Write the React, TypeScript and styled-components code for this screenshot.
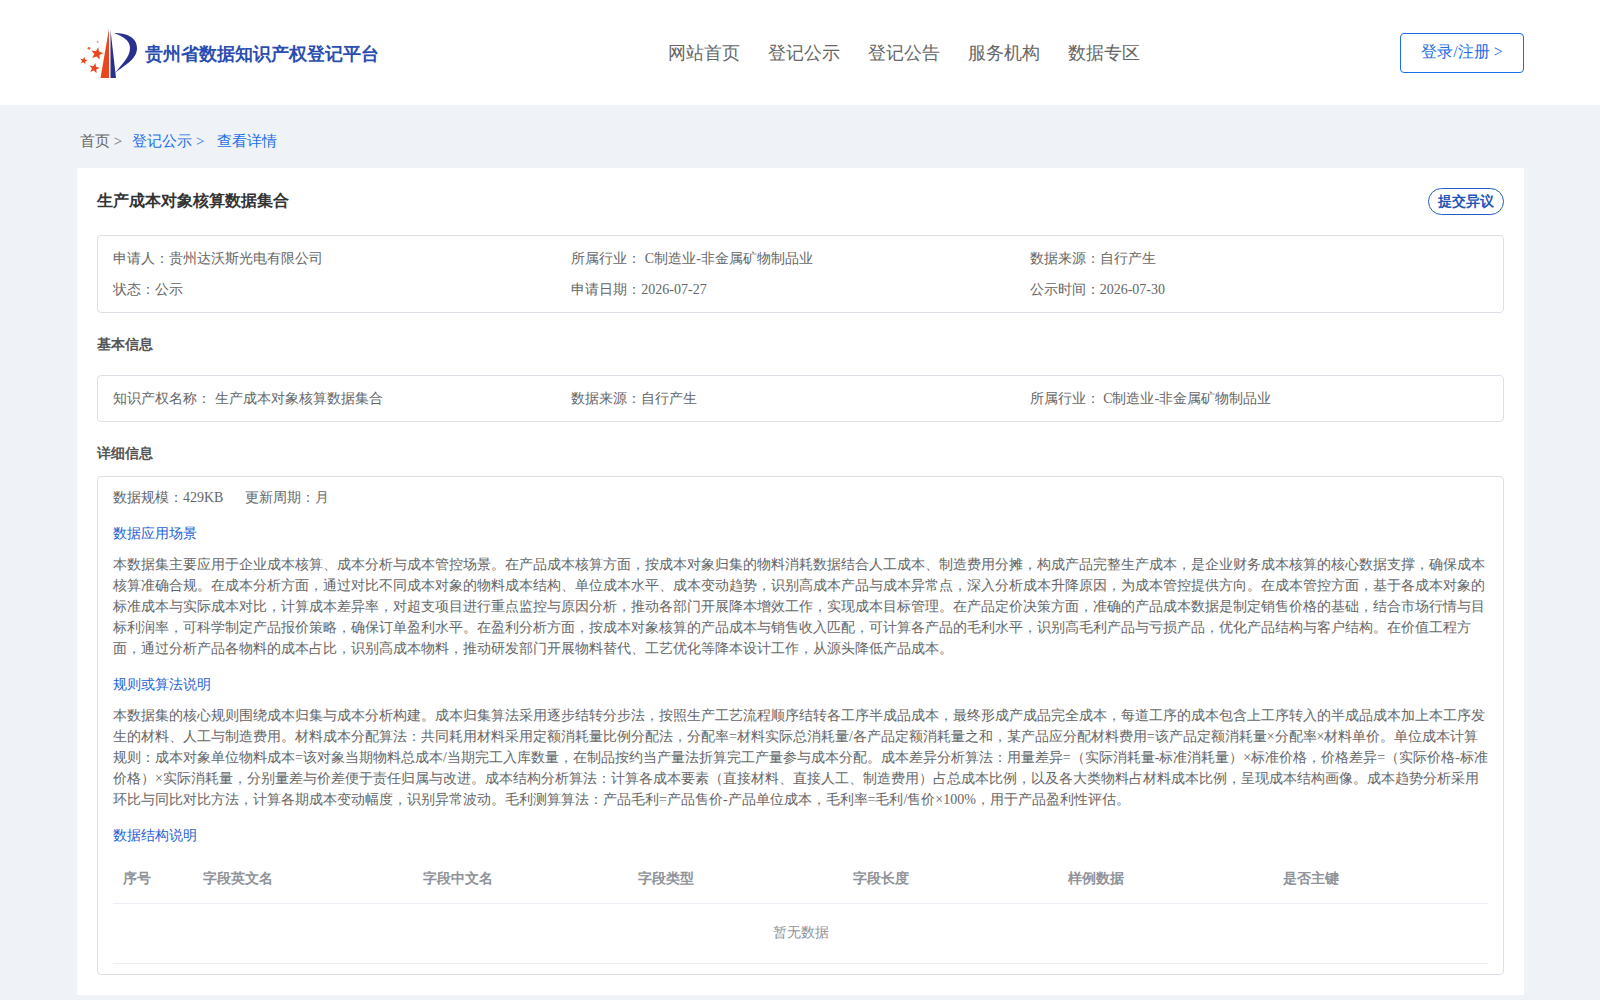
import React from 'react';
import styled, {createGlobalStyle} from 'styled-components';

const blue = '#1a6fe8';
const columns = ['序号', '字段英文名', '字段中文名', '字段类型', '字段长度', '样例数据', '是否主键'];
const columnWidths = [80, 220, 215, 215, 215, 215, 215];

const sceneText = '本数据集主要应用于企业成本核算、成本分析与成本管控场景。在产品成本核算方面，按成本对象归集的物料消耗数据结合人工成本、制造费用分摊，构成产品完整生产成本，是企业财务成本核算的核心数据支撑，确保成本核算准确合规。在成本分析方面，通过对比不同成本对象的物料成本结构、单位成本水平、成本变动趋势，识别高成本产品与成本异常点，深入分析成本升降原因，为成本管控提供方向。在成本管控方面，基于各成本对象的标准成本与实际成本对比，计算成本差异率，对超支项目进行重点监控与原因分析，推动各部门开展降本增效工作，实现成本目标管理。在产品定价决策方面，准确的产品成本数据是制定销售价格的基础，结合市场行情与目标利润率，可科学制定产品报价策略，确保订单盈利水平。在盈利分析方面，按成本对象核算的产品成本与销售收入匹配，可计算各产品的毛利水平，识别高毛利产品与亏损产品，优化产品结构与客户结构。在价值工程方面，通过分析产品各物料的成本占比，识别高成本物料，推动研发部门开展物料替代、工艺优化等降本设计工作，从源头降低产品成本。';

const ruleText = '本数据集的核心规则围绕成本归集与成本分析构建。成本归集算法采用逐步结转分步法，按照生产工艺流程顺序结转各工序半成品成本，最终形成产成品完全成本，每道工序的成本包含上工序转入的半成品成本加上本工序发生的材料、人工与制造费用。材料成本分配算法：共同耗用材料采用定额消耗量比例分配法，分配率=材料实际总消耗量/各产品定额消耗量之和，某产品应分配材料费用=该产品定额消耗量×分配率×材料单价。单位成本计算规则：成本对象单位物料成本=该对象当期物料总成本/当期完工入库数量，在制品按约当产量法折算完工产量参与成本分配。成本差异分析算法：用量差异=（实际消耗量-标准消耗量）×标准价格，价格差异=（实际价格-标准价格）×实际消耗量，分别量差与价差便于责任归属与改进。成本结构分析算法：计算各成本要素（直接材料、直接人工、制造费用）占总成本比例，以及各大类物料占材料成本比例，呈现成本结构画像。成本趋势分析采用环比与同比对比方法，计算各期成本变动幅度，识别异常波动。毛利测算算法：产品毛利=产品售价-产品单位成本，毛利率=毛利/售价×100%，用于产品盈利性评估。';

const GlobalStyle = createGlobalStyle`
    html, body {
        margin: 0;
        padding: 0;
        background: #eff2f6;
        font-family: "Liberation Serif", serif;
        color: #666;
    }
    * {
        box-sizing: border-box;
    }
`;

const Logo = () => (
    <LogoSvg viewBox="0 0 60 52" aria-label="logo">
        <path d="M31 2 L22.5 51 H31 Z" fill="#e8471c"/>
        <path d="M32.5 3 L32.5 51 L38 51 Z" fill="#27308f"/>
        <path d="M36 6 C48 6 59 10 59 21 C59 32 47 38 37 46 C44 37 52 30 52 21 C52 13 44 9 36 6 Z" fill="#27308f"/>
        <Star cx={19} cy={26.7} r={6.5}/>
        <Star cx={16.3} cy={41.3} r={5.5}/>
        <Star cx={5.7} cy={33.7} r={4}/>
        <circle cx={11} cy={21.3} r={1.4} fill="#ee6a3c"/>
        <circle cx={19.7} cy={15} r={0.9} fill="#ee8a64"/>
    </LogoSvg>
);

const Star = ({cx, cy, r}: {cx: number; cy: number; r: number}) => {
    const points = Array.from({length: 10}, (_, i) => {
        const radius = i % 2 === 0 ? r : r * 0.42;
        const angle = (Math.PI / 5) * i - Math.PI / 2 + 0.2;
        return `${cx + radius * Math.cos(angle)},${cy + radius * Math.sin(angle)}`;
    }).join(' ');
    return <polygon points={points} fill="#e8471c"/>;
};

export default function App() {
    return (
        <>
            <GlobalStyle/>
            <Header>
                <Brand>
                    <Logo/>
                    <BrandName>贵州省数据知识产权登记平台</BrandName>
                </Brand>
                <Nav>
                    <a>网站首页</a>
                    <a>登记公示</a>
                    <a>登记公告</a>
                    <a>服务机构</a>
                    <a>数据专区</a>
                </Nav>
                <LoginButton>登录/注册 &gt;</LoginButton>
            </Header>
            <Main>
                <Breadcrumb>
                    <span>首页 &gt;</span>
                    <Crumb>登记公示 &gt;</Crumb>
                    <Crumb>查看详情</Crumb>
                </Breadcrumb>
                <Card>
                    <TitleRow>
                        <Title>生产成本对象核算数据集合</Title>
                        <ObjectionButton>提交异议</ObjectionButton>
                    </TitleRow>
                    <InfoBox $rowGap={1}>
                        <InfoCell>申请人：贵州达沃斯光电有限公司</InfoCell>
                        <InfoCell>所属行业： C制造业-非金属矿物制品业</InfoCell>
                        <InfoCell>数据来源：自行产生</InfoCell>
                        <InfoCell>状态：公示</InfoCell>
                        <InfoCell>申请日期：2026-07-27</InfoCell>
                        <InfoCell>公示时间：2026-07-30</InfoCell>
                    </InfoBox>
                    <SectionTitle $after={19}>基本信息</SectionTitle>
                    <InfoBox>
                        <InfoCell>知识产权名称： 生产成本对象核算数据集合</InfoCell>
                        <InfoCell>数据来源：自行产生</InfoCell>
                        <InfoCell>所属行业： C制造业-非金属矿物制品业</InfoCell>
                    </InfoBox>
                    <SectionTitle $after={11}>详细信息</SectionTitle>
                    <DetailBox>
                        <Meta>
                            <span>数据规模：429KB</span>
                            <span>更新周期：月</span>
                        </Meta>
                        <BlockTitle>数据应用场景</BlockTitle>
                        <Paragraph>{sceneText}</Paragraph>
                        <BlockTitle>规则或算法说明</BlockTitle>
                        <Paragraph>{ruleText}</Paragraph>
                        <BlockTitle>数据结构说明</BlockTitle>
                        <Table>
                            <colgroup>
                                {columnWidths.map((w, i) => <col key={i} width={w}/>)}
                            </colgroup>
                            <thead>
                                <tr>
                                    {columns.map(c => <th key={c}>{c}</th>)}
                                </tr>
                            </thead>
                            <tbody>
                                <tr>
                                    <td colSpan={columns.length}>暂无数据</td>
                                </tr>
                            </tbody>
                        </Table>
                    </DetailBox>
                </Card>
            </Main>
        </>
    );
}

const Header = styled.header`
    height: 105px;
    background: #fff;
    display: flex;
    align-items: center;
    padding: 0 76px 0 80px;
`;

const Brand = styled.div`
    display: flex;
    align-items: center;
    gap: 7px;
`;

const LogoSvg = styled.svg`
    width: 60px;
    height: 52px;
    margin-left: -2px;
    display: block;
`;

const BrandName = styled.div`
    font-size: 18px;
    font-weight: 700;
    color: #2a4db0;
    margin-top: 3px;
`;

const Nav = styled.nav`
    display: flex;
    gap: 28px;
    margin-left: 289px;
    flex: 1;

    & a {
        font-size: 18px;
        color: #666;
        line-height: 24px;
    }
`;

const LoginButton = styled.button`
    width: 124px;
    height: 40px;
    background: #fff;
    border: 1px solid ${blue};
    border-radius: 4px;
    color: ${blue};
    font-family: inherit;
    font-size: 16px;
    padding: 0;
`;

const Main = styled.main`
    padding: 0 76px 5px 77px;
`;

const Breadcrumb = styled.div`
    height: 63px;
    padding: 25px 0 0 3px;
    display: flex;
    font-size: 15px;
    line-height: 22px;
    color: #666;
`;

const Crumb = styled.span`
    color: ${blue};
    margin-left: 10px;

    & + & {
        margin-left: 13px;
    }
`;

const Card = styled.section`
    height: 827px;
    background: #fff;
    padding: 20px;
`;

const TitleRow = styled.div`
    display: flex;
    justify-content: space-between;
    align-items: flex-start;
    height: 27px;
    margin-bottom: 20px;
`;

const Title = styled.h1`
    margin: 1px 0 0;
    font-size: 16px;
    font-weight: 700;
    line-height: 24px;
    color: #333;
`;

const ObjectionButton = styled.button`
    width: 76px;
    height: 27px;
    padding: 0;
    background: #fff;
    border: 1px solid #1f5ec4;
    border-radius: 14px;
    color: #1f55b8;
    font-family: inherit;
    font-size: 14px;
    font-weight: 700;
`;

const InfoBox = styled.div<{ $rowGap?: number }>`
    display: grid;
    grid-template-columns: repeat(3, 1fr);
    row-gap: ${p => p.$rowGap ?? 0}px;
    padding: 8px 15px 7px;
    border: 1px solid #dcdfe6;
    border-radius: 4px;
`;

const InfoCell = styled.div`
    font-size: 14px;
    line-height: 30px;
    color: #666;
`;

const SectionTitle = styled.h2<{ $after: number }>`
    margin: 21px 0 ${p => p.$after}px;
    font-size: 14px;
    font-weight: 700;
    line-height: 22px;
    color: #555;
`;

const DetailBox = styled.div`
    height: 499px;
    padding: 10px 15px;
    border: 1px solid #dcdfe6;
    border-radius: 4px;
`;

const Meta = styled.div`
    display: flex;
    gap: 22px;
    font-size: 14px;
    line-height: 21px;
`;

const BlockTitle = styled.div`
    margin-top: 15px;
    font-size: 14px;
    line-height: 21px;
    color: #1f62d6;
`;

const Paragraph = styled.p`
    margin: 10px 0 0;
    font-size: 14px;
    line-height: 21px;
    color: #666;
`;

const Table = styled.table`
    width: 100%;
    margin-top: 9px;
    border-collapse: collapse;
    table-layout: fixed;
    font-size: 14px;

    & th {
        height: 48px;
        padding: 0 10px;
        text-align: left;
        font-weight: 700;
        color: #909399;
        border-bottom: 1px solid #ebeef5;
    }

    & td {
        height: 60px;
        text-align: center;
        color: #909399;
        border-bottom: 1px solid #ebeef5;
    }
`;
